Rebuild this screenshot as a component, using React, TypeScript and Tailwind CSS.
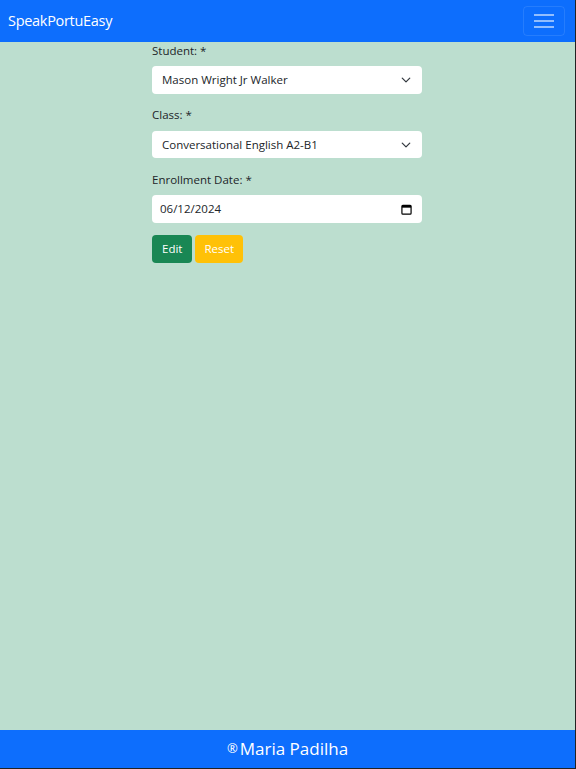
const font = { fontFamily: '"Open Sans", "Noto Sans", sans-serif' };

function Chevron() {
  return (
    <svg width="10" height="10" viewBox="0 0 16 16" fill="none" className="text-[#343a40]">
      <path d="M2 5l6 6 6-6" stroke="currentColor" strokeWidth="2" strokeLinecap="round" strokeLinejoin="round" />
    </svg>
  );
}

function CalendarGlyph() {
  return (
    <svg width="11" height="11" viewBox="0 0 12 12" fill="none">
      <rect x="1" y="1.5" width="10" height="9.5" rx="1" stroke="#000" strokeWidth="1.3" />
      <rect x="1" y="1.5" width="10" height="2.5" fill="#000" />
    </svg>
  );
}

export default function App() {
  return (
    <div
      className="flex h-[769px] w-[576px] flex-col border-b border-r border-[#222] bg-[#bcdecf]"
      style={font}
    >
      <nav className="flex h-[42px] shrink-0 items-center justify-between bg-[#0d6efd] pl-[8px] pr-[10px]">
        <span className="text-[14.5px] tracking-[-0.3px] text-white">SpeakPortuEasy</span>
        <button className="flex h-[30px] w-[42px] flex-col items-center justify-center gap-[4px] rounded-[4px] border border-white/10">
          <span className="block h-[2px] w-[20px] bg-white/55" />
          <span className="block h-[2px] w-[20px] bg-white/55" />
          <span className="block h-[2px] w-[20px] bg-white/55" />
        </button>
      </nav>

      <main className="flex-1">
        <form className="ml-[152px] w-[270px] text-[#212529]">
          <label className="block text-[11.5px] leading-[18px]">Student: *</label>
          <div className="mt-[6px] flex h-[28px] items-center justify-between rounded-[4px] bg-white pl-[10px] pr-[11px] text-[11.5px]">
            <span>Mason Wright Jr Walker</span>
            <Chevron />
          </div>

          <label className="mt-[12px] block text-[11.5px] leading-[18px]">Class: *</label>
          <div className="mt-[7px] flex h-[27px] items-center justify-between rounded-[4px] bg-white pl-[10px] pr-[11px] text-[11.5px]">
            <span>Conversational English A2-B1</span>
            <Chevron />
          </div>

          <label className="mt-[13px] block text-[11.5px] leading-[18px]">Enrollment Date: *</label>
          <div className="mt-[6px] flex h-[28px] items-center justify-between rounded-[4px] bg-white pl-[8px] pr-[10px] text-[11.5px]">
            <span>06/12/2024</span>
            <CalendarGlyph />
          </div>

          <div className="mt-[12px] flex gap-[3px]">
            <button type="button" className="h-[28px] rounded-[4px] bg-[#198754] px-[10px] text-[11.5px] text-white">
              Edit
            </button>
            <button type="button" className="h-[28px] rounded-[4px] bg-[#ffc107] px-[9px] text-[11.5px] text-white">
              Reset
            </button>
          </div>
        </form>
      </main>

      <footer className="flex h-[38px] shrink-0 items-center justify-center bg-[#0d6efd] text-white">
        <span className="text-[13px]">®</span>
        <span className="ml-[2px] text-[17px]">Maria Padilha</span>
      </footer>
    </div>
  );
}
